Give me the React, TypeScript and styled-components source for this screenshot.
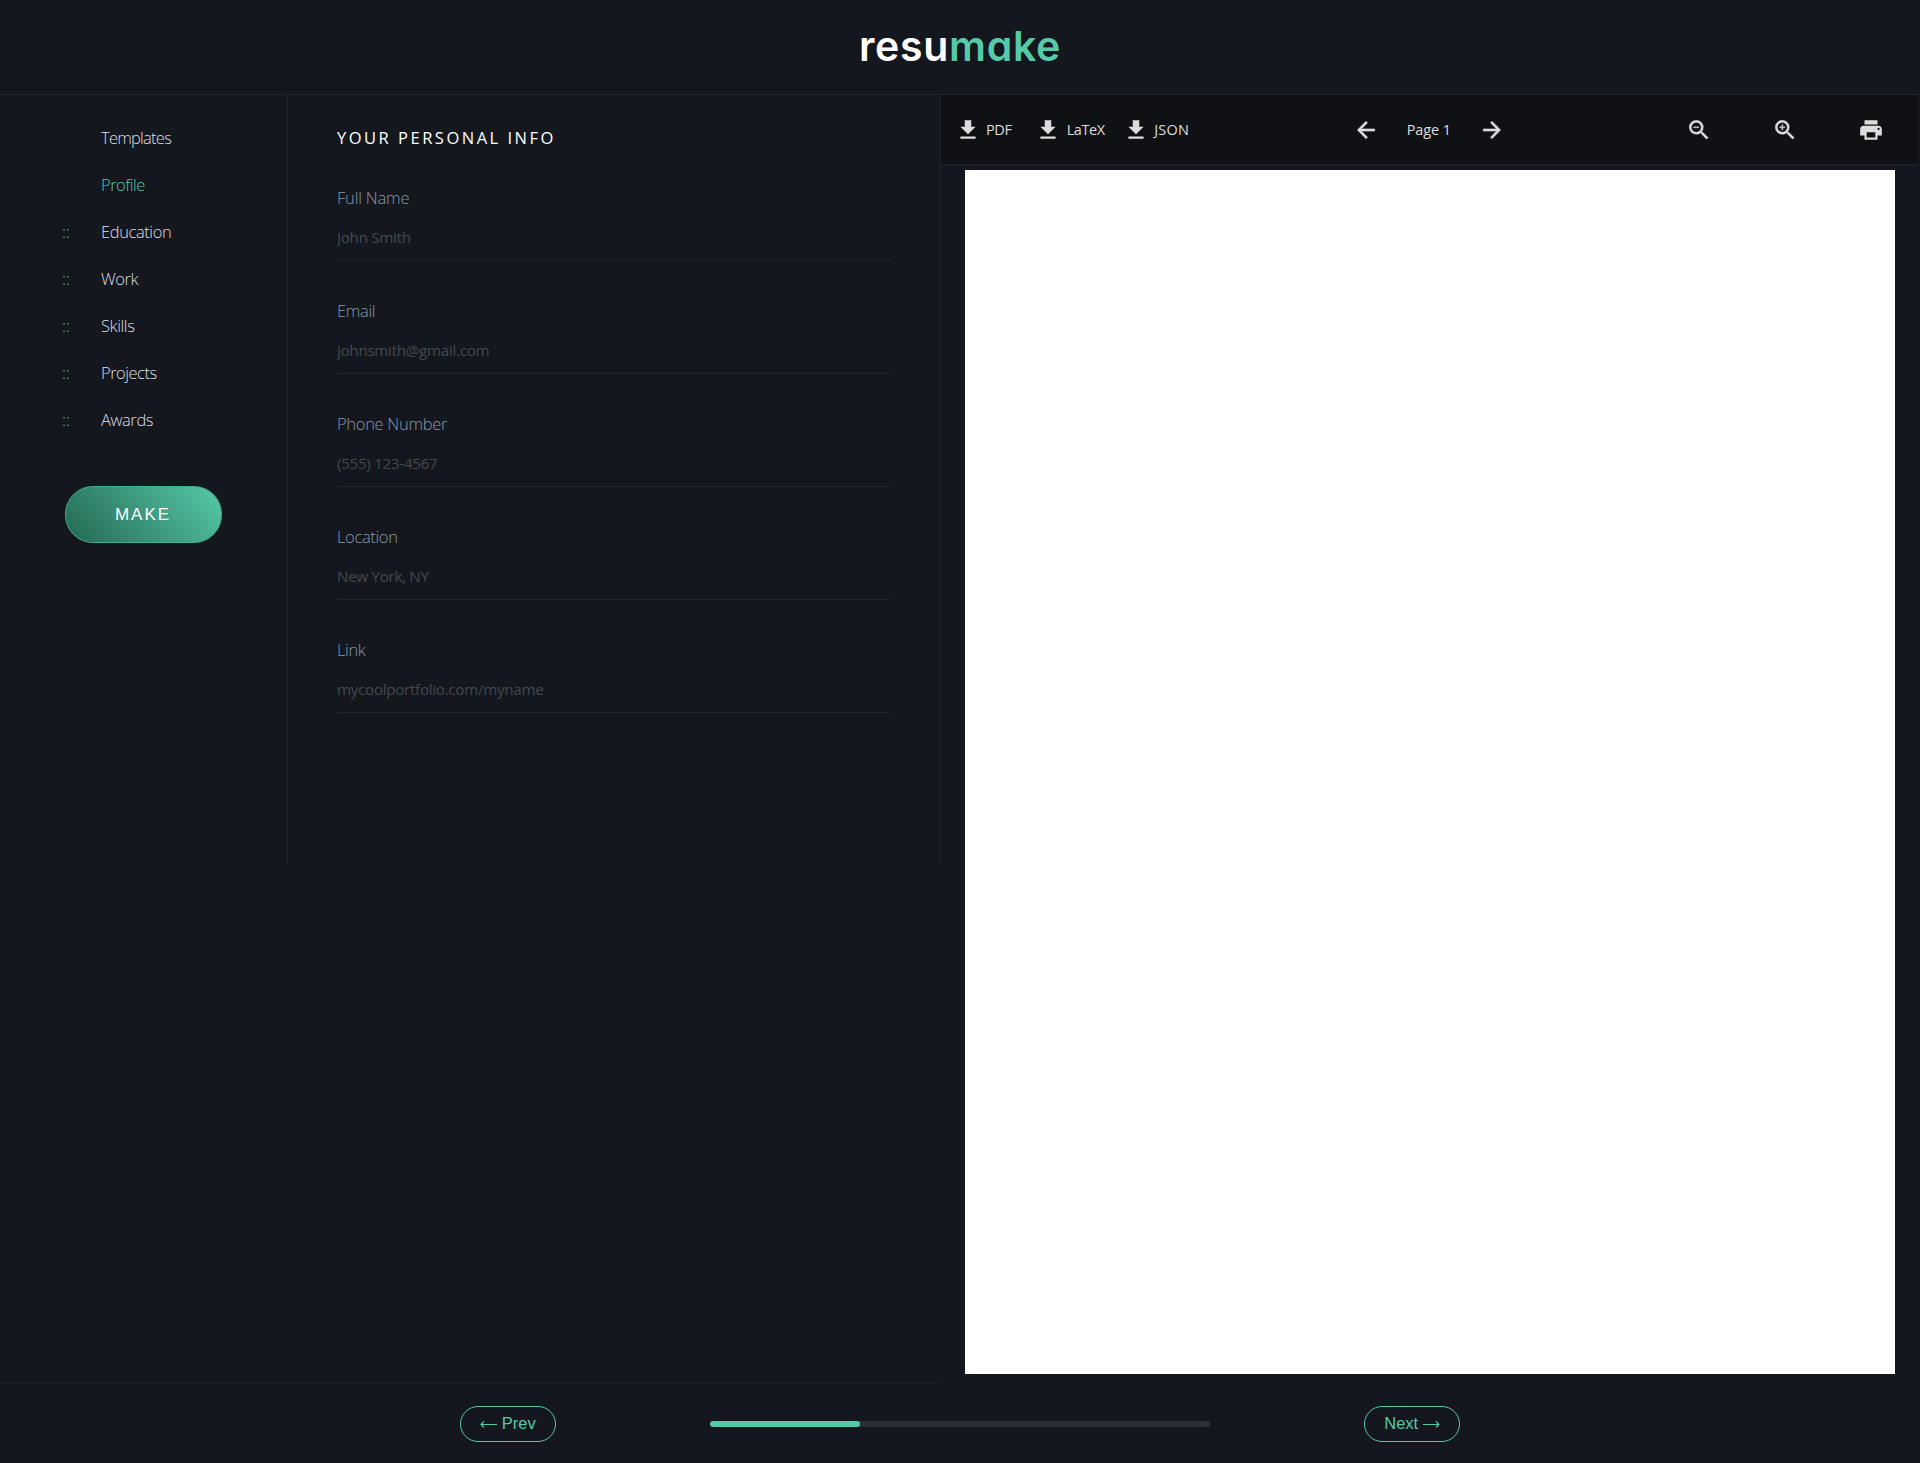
import React from 'react'
import styled, { createGlobalStyle } from 'styled-components'
import { MdFileDownload, MdArrowBack, MdArrowForward, MdZoomOut, MdZoomIn, MdPrint } from 'react-icons/md'

const color = {
  page: '#14171e',
  bar: '#101115',
  line: '#20242e',
  green: '#56c9a9',
  icon: '#dddddd',
}

const GlobalStyle = createGlobalStyle`
  * { box-sizing: border-box; }
  body {
    margin: 0;
    background: ${color.page};
    font-family: 'Open Sans', 'Noto Sans', sans-serif;
  }
  button, input { font-family: inherit; }
`

const Page = styled.div`
  display: flex;
  flex-direction: column;
  height: 1463px;
  overflow: hidden;
`

const Header = styled.header`
  display: flex;
  justify-content: center;
  height: 95px;
  border-bottom: 1px solid ${color.line};
`

const Logo = styled.h1`
  margin: 0;
  padding-top: 20px;
  font: 600 41px/52px Inter, sans-serif;
  font-feature-settings: 'cv11' 1;
  letter-spacing: 0.7px;
  color: #fff;
`

const LogoAccent = styled.span`
  color: ${color.green};
`

const Main = styled.main`
  display: flex;
  height: 1288px;
`

const Editor = styled.div`
  display: flex;
  width: 941px;
  height: 770px;
  border-right: 1px solid ${color.line};
`

const Sidebar = styled.aside`
  display: flex;
  flex-direction: column;
  width: 288px;
  padding: 19px 0 0 62px;
  border-right: 1px solid ${color.line};
`

const NavList = styled.ul`
  margin: 0;
  padding: 0;
  list-style: none;
`

const NavItem = styled.li<{ $active?: boolean; $tracking?: number }>`
  display: flex;
  align-items: center;
  height: 47px;
  font-size: 16.5px;
  font-weight: 300;
  letter-spacing: ${(p) => p.$tracking ?? -0.4}px;
  color: ${(p) => (p.$active ? color.green : '#dcdfe3')};
`

const Handle = styled.span`
  width: 39px;
  letter-spacing: 0;
  color: ${color.green};
`

const MakeButton = styled.button`
  width: 157px;
  height: 57px;
  margin: 43px 0 0 3px;
  padding: 1px 1px 0 0;
  border: 1px solid #3cb08c;
  border-radius: 28px;
  background: linear-gradient(50deg, #246853, #56c9a9);
  color: #fff;
  font: 400 17px 'Liberation Sans', Arial, sans-serif;
  letter-spacing: 2px;
`

const Form = styled.form`
  flex: 1;
  padding: 28px 49px 0;
`

const FormTitle = styled.h2`
  margin: 0 0 30px;
  font-size: 16.5px;
  line-height: 30px;
  font-weight: 400;
  letter-spacing: 2.5px;
  color: #fff;
`

const Field = styled.label`
  display: block;
  height: 113px;
`

const FieldName = styled.span<{ $tracking: number }>`
  display: block;
  font-size: 16.5px;
  line-height: 30px;
  font-weight: 300;
  letter-spacing: ${(p) => p.$tracking}px;
  color: #8a98ac;
`

const Input = styled.input`
  display: block;
  width: 100%;
  height: 43px;
  margin-top: 5px;
  padding: 0 0 4px;
  border: 0;
  border-bottom: 1px solid ${color.line};
  background: transparent;
  color: #fff;
  font-size: 15.2px;
  letter-spacing: -0.3px;
  outline: 0;

  &::placeholder {
    color: #434850;
    opacity: 1;
  }
`

const Preview = styled.section`
  flex: 1;
`

const Toolbar = styled.div`
  display: flex;
  align-items: center;
  width: 976px;
  height: 70px;
  padding-left: 13.5px;
  border-bottom: 1px solid ${color.line};
  background: ${color.bar};
  color: ${color.icon};
`

const Tool = styled.span<{ $width: number; $tracking?: number; $stroke?: number }>`
  display: flex;
  align-items: center;
  flex: none;
  gap: 5.5px;
  width: ${(p) => p.$width}px;
  font-size: 14.5px;
  letter-spacing: ${(p) => p.$tracking ?? -0.4}px;
  white-space: nowrap;

  svg {
    flex: none;
    width: 26px;
    height: 26px;
    stroke-width: ${(p) => p.$stroke ?? 0};
  }

  path[fill='none'] {
    stroke: none;
  }
`

const Paper = styled.div`
  width: 930px;
  height: 1204px;
  margin: 5px 0 0 24px;
  background: #fff;
`

const Footer = styled.footer`
  display: flex;
  flex-direction: column;
  flex: 1;
`

const FooterLine = styled.div`
  width: 941px;
  height: 1px;
  background: #1b1f26;
`

const FooterRow = styled.div`
  display: flex;
  align-items: center;
  justify-content: center;
  gap: 154px;
  height: 79px;
  padding-top: 1px;
`

const StepButton = styled.button`
  display: flex;
  align-items: center;
  justify-content: center;
  gap: 4.5px;
  width: 96px;
  height: 36px;
  padding: 0 0 1px;
  border: 1px solid ${color.green};
  border-radius: 18px;
  background: transparent;
  color: ${color.green};
  font: 400 16.5px 'Liberation Sans', Arial, sans-serif;
`

const Arrow = styled.svg`
  width: 17px;
  height: 9px;
  margin-top: 2px;
  fill: none;
  stroke: currentColor;
  stroke-width: 1.1;
`

const Track = styled.div`
  width: 500px;
  height: 6px;
  border-radius: 3px;
  background: #2a2f39;
`

const Progress = styled.div`
  width: 30%;
  height: 6px;
  border-radius: 3px;
  background: ${color.green};
`

const sections = [
  { name: 'Templates', tracking: -0.75 },
  { name: 'Profile', active: true, tracking: -0.5 },
  { name: 'Education', movable: true },
  { name: 'Work', movable: true },
  { name: 'Skills', movable: true },
  { name: 'Projects', movable: true, tracking: -0.5 },
  { name: 'Awards', movable: true },
]

const fields = [
  { name: 'Full Name', hint: 'John Smith', tracking: -0.2 },
  { name: 'Email', hint: 'johnsmith@gmail.com', tracking: -0.35 },
  { name: 'Phone Number', hint: '(555) 123-4567', tracking: -0.3 },
  { name: 'Location', hint: 'New York, NY', tracking: -0.35 },
  { name: 'Link', hint: 'mycoolportfolio.com/myname', tracking: -0.4 },
]

export default function App() {
  return (
    <Page>
      <GlobalStyle />
      <Header>
        <Logo>resu<LogoAccent>make</LogoAccent></Logo>
      </Header>
      <Main>
        <Editor>
          <Sidebar>
            <NavList>
              {sections.map((s) => (
                <NavItem key={s.name} $active={s.active} $tracking={s.tracking}>
                  <Handle>{s.movable ? '::' : ''}</Handle>
                  {s.name}
                </NavItem>
              ))}
            </NavList>
            <MakeButton>MAKE</MakeButton>
          </Sidebar>
          <Form>
            <FormTitle>YOUR PERSONAL INFO</FormTitle>
            {fields.map((f) => (
              <Field key={f.name}>
                <FieldName $tracking={f.tracking}>{f.name}</FieldName>
                <Input placeholder={f.hint} />
              </Field>
            ))}
          </Form>
        </Editor>
        <Preview>
          <Toolbar>
            <Tool $width={80.7}><MdFileDownload />PDF</Tool>
            <Tool $width={87.5}><MdFileDownload />LaTeX</Tool>
            <Tool $width={230.5} $tracking={0.2}><MdFileDownload />JSON</Tool>
            <Tool $width={53.5} $stroke={0.5}><MdArrowBack /></Tool>
            <Tool $width={72} $tracking={-0.1}>Page 1</Tool>
            <Tool $width={207} $stroke={0.5}><MdArrowForward /></Tool>
            <Tool $width={86} $stroke={0.3}><MdZoomOut /></Tool>
            <Tool $width={86.5} $stroke={0.3}><MdZoomIn /></Tool>
            <Tool $width={26}><MdPrint /></Tool>
          </Toolbar>
          <Paper />
        </Preview>
      </Main>
      <Footer>
        <FooterLine />
        <FooterRow>
          <StepButton>
            <Arrow viewBox="0 0 17 9"><path d="M17 4.5H1M4 1.5L1 4.5L4 7.5" /></Arrow>
            Prev
          </StepButton>
          <Track><Progress /></Track>
          <StepButton>
            Next
            <Arrow viewBox="0 0 17 9"><path d="M0 4.5H16M13 1.5L16 4.5L13 7.5" /></Arrow>
          </StepButton>
        </FooterRow>
      </Footer>
    </Page>
  )
}
